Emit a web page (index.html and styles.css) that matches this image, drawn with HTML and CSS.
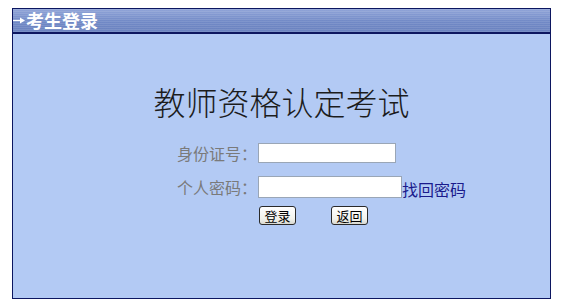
FILE: index.html
```html
<!DOCTYPE html>
<html lang="zh-CN">
<head>
<meta charset="utf-8">
<title>考生登录</title>
<link rel="stylesheet" href="styles.css">
</head>
<body>
<div class="box">
  <div class="box-head">
    <svg class="arrow" width="12" height="7" viewBox="0 0 12 7"><path d="M0 3.5H8" stroke="#fff" stroke-width="1.2"/><path d="M7 0.5L12 3.5L7 6.5Z" fill="#fff"/></svg>
    <span class="head-title">考生登录</span>
  </div>
  <div class="box-body">
    <h1 class="title">教师资格认定考试</h1>
    <form class="login">
      <div class="row row-id">
        <label class="lbl">身份证号：</label>
        <input class="field field-id" type="text">
      </div>
      <div class="row row-pw">
        <label class="lbl">个人密码：</label>
        <input class="field field-pw" type="password">
        <a class="forgot" href="#">找回密码</a>
      </div>
      <div class="row row-btn">
        <button class="btn" type="button">登录</button>
        <button class="btn" type="button">返回</button>
      </div>
    </form>
  </div>
</div>
</body>
</html>
```
FILE: styles.css
```css
html, body {
  margin: 0;
  padding: 0;
  background: #ffffff;
}
body {
  font-family: "Noto Sans CJK SC", "Liberation Sans", sans-serif;
}
.box {
  margin: 8px 0 0 12px;
  width: 537px;
  height: 289px;
  border: 1px solid #0c1660;
  background: #b3caf4;
  display: flex;
  flex-direction: column;
}
.box-head {
  height: 23px;
  border-bottom: 2px solid #0c1660;
  background:
    repeating-linear-gradient(to bottom, rgba(255,255,255,0.10) 0 1px, rgba(0,0,0,0) 1px 2px),
    linear-gradient(to bottom, #91a5d8 0%, #7189c6 55%, #6a82bf 100%);
  display: flex;
  align-items: center;
  color: #ffffff;
}
.arrow {
  margin-left: 0;
  margin-right: 1px;
  display: block;
}
.head-title {
  font-size: 18px;
  font-weight: bold;
  line-height: 23px;
  letter-spacing: 0;
}
.box-body {
  flex: 1;
  display: flex;
  flex-direction: column;
}
.title {
  margin: 47px 0 0 0;
  font-size: 32px;
  font-weight: 300;
  line-height: 40px;
  text-align: center;
  color: #1c1c1c;
}
.login {
  margin: 22px 0 0 164px;
  display: flex;
  flex-direction: column;
}
.row {
  display: flex;
  align-items: center;
}
.row-id {
  height: 20px;
  margin-bottom: 13px;
}
.row-pw {
  height: 22px;
  margin-bottom: 8px;
}
.row-btn {
  height: 19px;
  padding-left: 82px;
  gap: 35px;
}
.lbl {
  width: 81px;
  font-size: 16px;
  line-height: 20px;
  color: #7a7a7a;
}
.field {
  box-sizing: border-box;
  margin: 0;
  padding: 0 2px;
  border: 1px solid #9aa6b6;
  background: #ffffff;
  font-size: 13px;
}
.field-id {
  width: 138px;
  height: 20px;
}
.field-pw {
  width: 144px;
  height: 22px;
}
.forgot {
  font-size: 16px;
  line-height: 20px;
  color: #1a1a8c;
  text-decoration: none;
  padding-top: 4px;
}
.btn {
  box-sizing: border-box;
  height: 19px;
  width: 37px;
  margin: 0;
  padding: 0;
  border: 1px solid #2a2a2a;
  border-radius: 3px;
  background: linear-gradient(to bottom, #ffffff 0%, #f2f2ec 70%, #d8d8d0 100%);
  font-family: "Noto Sans CJK SC", sans-serif;
  font-size: 13px;
  line-height: 17px;
  color: #000000;
}
```
